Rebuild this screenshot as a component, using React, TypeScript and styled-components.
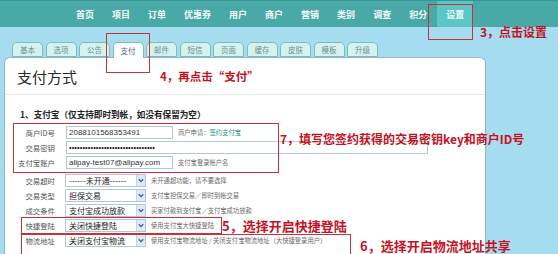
import React from "react";
import styled, { createGlobalStyle } from "styled-components";

const GlobalStyle = createGlobalStyle`
  html, body { margin: 0; padding: 0; }
  body {
    background: #a6dcef;
    font-family: "Liberation Sans", "Noto Sans CJK SC", sans-serif;
  }
`;

const CJK = `"Noto Sans CJK SC", "Liberation Sans", sans-serif`;

const Page = styled.div`
  position: relative;
  width: 558px;
  height: 254px;
  overflow: hidden;
  background: #a6dcef;
  display: flex;
  flex-direction: column;
`;

const NavBar = styled.nav`
  height: 27px;
  flex: none;
  background: #49a9a6;
  border-top: 1px solid #3d9592;
  box-sizing: border-box;
  display: flex;
  align-items: stretch;
  padding-left: 67px;
`;

const NavItem = styled.span<{ $active?: boolean }>`
  display: flex;
  align-items: center;
  padding: 0 9px;
  font-family: ${CJK};
  font-size: 9px;
  font-weight: 700;
  color: #f4fbfa;
  background: ${(p) => (p.$active ? "#5bc6c6" : "transparent")};
  margin-left: ${(p) => (p.$active ? "1px" : "0")};
`;

const TabRow = styled.div`
  flex: none;
  display: flex;
  align-items: flex-end;
  gap: 2.5px;
  height: 15px;
  margin-top: 15px;
  padding-left: 12px;
  position: relative;
  z-index: 2;
`;

const Tab = styled.span<{ $active?: boolean }>`
  box-sizing: border-box;
  width: 31px;
  height: ${(p) => (p.$active ? "16px" : "15px")};
  margin-bottom: ${(p) => (p.$active ? "-1px" : "0")};
  display: flex;
  align-items: center;
  justify-content: center;
  border: 1px solid #77c1b4;
  border-bottom: ${(p) => (p.$active ? "none" : "1px solid #77c1b4")};
  border-radius: 5px 5px 0 0;
  background: ${(p) => (p.$active ? "#ffffff" : "#d6f2ee")};
  font-family: ${CJK};
  font-size: 7.5px;
  color: ${(p) => (p.$active ? "#4d6e6e" : "#6a9090")};
`;

const Panel = styled.section`
  flex: 1;
  margin: 0 72px 0 4px;
  background: #ffffff;
  border: 1px solid #8db9d2;
  border-bottom: none;
  border-radius: 6px 6px 0 0;
  position: relative;
  z-index: 1;
`;

const Title = styled.h1`
  margin: 0;
  padding: 11px 0 0 12px;
  height: 36px;
  box-sizing: border-box;
  font-family: ${CJK};
  font-size: 15px;
  line-height: 15px;
  font-weight: 400;
  color: #2a2a2a;
`;

const Divider = styled.hr`
  margin: 0;
  border: none;
  border-top: 1px solid #e3edf2;
`;

const SectionTitle = styled.h2`
  margin: 0;
  padding: 14px 0 0 15px;
  font-family: ${CJK};
  font-size: 8.6px;
  line-height: 10px;
  font-weight: 700;
  color: #222;
  white-space: nowrap;
`;

const Form = styled.div`
  display: flex;
  flex-direction: column;
  padding-top: 6px;
`;

const Group = styled.div<{ $gap?: number }>`
  display: flex;
  flex-direction: column;
  margin-bottom: ${(p) => p.$gap ?? 0}px;
`;

const Row = styled.div`
  display: flex;
  align-items: center;
  height: 15px;
`;

const Label = styled.label`
  width: 50px;
  flex: none;
  text-align: right;
  font-family: ${CJK};
  font-size: 7.4px;
  color: #555;
  white-space: nowrap;
`;

const TextInput = styled.input<{ $w: number }>`
  box-sizing: border-box;
  width: ${(p) => p.$w}px;
  height: 13px;
  margin-left: 11px;
  padding: 0 2px;
  border: 1px solid #b3c6d3;
  font-family: "Liberation Sans", sans-serif;
  font-size: 8px;
  color: #333;
  background: #fff;
  outline: none;
`;

const PassInput = styled(TextInput)`
  font-size: 7.4px;
  letter-spacing: 0.1px;
  color: #111;
`;

const SelectBox = styled.span`
  box-sizing: border-box;
  display: flex;
  align-items: center;
  width: 81px;
  height: 13px;
  margin-left: 10px;
  border: 1px solid #b3c6d3;
  background: #fff;
`;

const SelectText = styled.span`
  flex: 1;
  padding-left: 3px;
  font-family: ${CJK};
  font-size: 8px;
  color: #222;
  white-space: nowrap;
  overflow: hidden;
`;

const ArrowBtn = styled.span`
  width: 8px;
  height: 11px;
  display: flex;
  align-items: center;
  justify-content: center;
  background: #dde9f8;
  border-left: 1px solid #c5d6ea;
`;

const Hint = styled.span`
  margin-left: 5px;
  font-family: ${CJK};
  font-size: 6.3px;
  color: #6a6a6a;
  white-space: nowrap;
`;

const LinkText = styled.span`
  color: #2a8f8f;
`;

const RedBox = styled.div`
  position: absolute;
  border: 1.5px solid #c8303a;
  box-sizing: border-box;
  pointer-events: none;
  z-index: 5;
`;

const Note = styled.div<{ $size: number }>`
  position: absolute;
  font-family: ${CJK};
  font-weight: 700;
  font-size: ${(p) => p.$size}px;
  line-height: 1;
  color: #c4121f;
  white-space: nowrap;
  z-index: 6;
`;

const Arrow = () => (
  <ArrowBtn>
    <svg width="6" height="5" viewBox="0 0 6 5">
      <path d="M0.8 1.2 L3 3.6 L5.2 1.2" fill="none" stroke="#2f5fa8" strokeWidth="1.3" />
    </svg>
  </ArrowBtn>
);

const Select = ({ value }: { value: string }) => (
  <SelectBox>
    <SelectText>{value}</SelectText>
    <Arrow />
  </SelectBox>
);

const navItems = ["首页", "项目", "订单", "优惠券", "用户", "商户", "营销", "类别", "调查", "积分", "设置"];
const tabs = ["基本", "选项", "公告", "支付", "邮件", "短信", "页面", "缓存", "皮肤", "模板", "升级"];

const selectRows = [
  { label: "交易超时", value: "------未开通------", hint: "未开通超功能，请不要选择" },
  { label: "交易类型", value: "担保交易", hint: "支付宝担保交易／即时到帐交易" },
  { label: "成交条件", value: "支付宝成功放款", hint: "买家付款到支付宝／支付宝成功放款" },
  { label: "快捷登陆", value: "关闭快捷登陆", hint: "使用支付宝大快捷登陆" },
  { label: "物流地址", value: "关闭支付宝物流", hint: "使用支付宝物流地址 / 关闭支付宝物流地址（大快捷登录用户）" },
];

export default function App() {
  return (
    <>
      <GlobalStyle />
      <Page>
        <NavBar>
          {navItems.map((n) => (
            <NavItem key={n} $active={n === "设置"}>
              {n}
            </NavItem>
          ))}
        </NavBar>
        <TabRow>
          {tabs.map((t) => (
            <Tab key={t} $active={t === "支付"}>
              {t}
            </Tab>
          ))}
        </TabRow>
        <Panel>
          <Title>支付方式</Title>
          <Divider />
          <SectionTitle>1、支付宝（仅支持即时到帐，如没有保留为空）</SectionTitle>
          <Form>
            <Group $gap={3}>
              <Row>
                <Label>商户ID号</Label>
                <TextInput $w={107} readOnly value="2088101568353491" />
                <Hint>
                  商户申请：<LinkText>签约支付宝</LinkText>
                </Hint>
              </Row>
              <Row>
                <Label>交易密钥</Label>
                <PassInput $w={362} type="password" readOnly value={"x".repeat(32)} />
              </Row>
              <Row>
                <Label>支付宝账户</Label>
                <TextInput $w={107} readOnly value="alipay-test07@alipay.com" />
                <Hint>支付宝登录帐户名</Hint>
              </Row>
            </Group>
            {selectRows.map((r) => (
              <Row key={r.label}>
                <Label>{r.label}</Label>
                <Select value={r.value} />
                <Hint>{r.hint}</Hint>
              </Row>
            ))}
          </Form>
        </Panel>

        <RedBox style={{ left: 428, top: 4, width: 45, height: 36 }} />
        <Note $size={12} style={{ left: 480, top: 26 }}>3，点击设置</Note>

        <RedBox style={{ left: 106, top: 33, width: 44, height: 40 }} />
        <Note $size={11.5} style={{ left: 160, top: 71 }}>4，再点击“支付”</Note>

        <RedBox style={{ left: 13, top: 123, width: 266, height: 50 }} />
        <Note $size={12} style={{ left: 280, top: 133 }}>7，填写您签约获得的交易密钥key和商户ID号</Note>

        <RedBox style={{ left: 21, top: 217, width: 201, height: 17 }} />
        <Note $size={13} style={{ left: 222, top: 219 }}>5，选择开启快捷登陆</Note>

        <RedBox style={{ left: 21, top: 234, width: 330, height: 30 }} />
        <Note $size={13} style={{ left: 360, top: 239 }}>6，选择开启物流地址共享</Note>
      </Page>
    </>
  );
}
